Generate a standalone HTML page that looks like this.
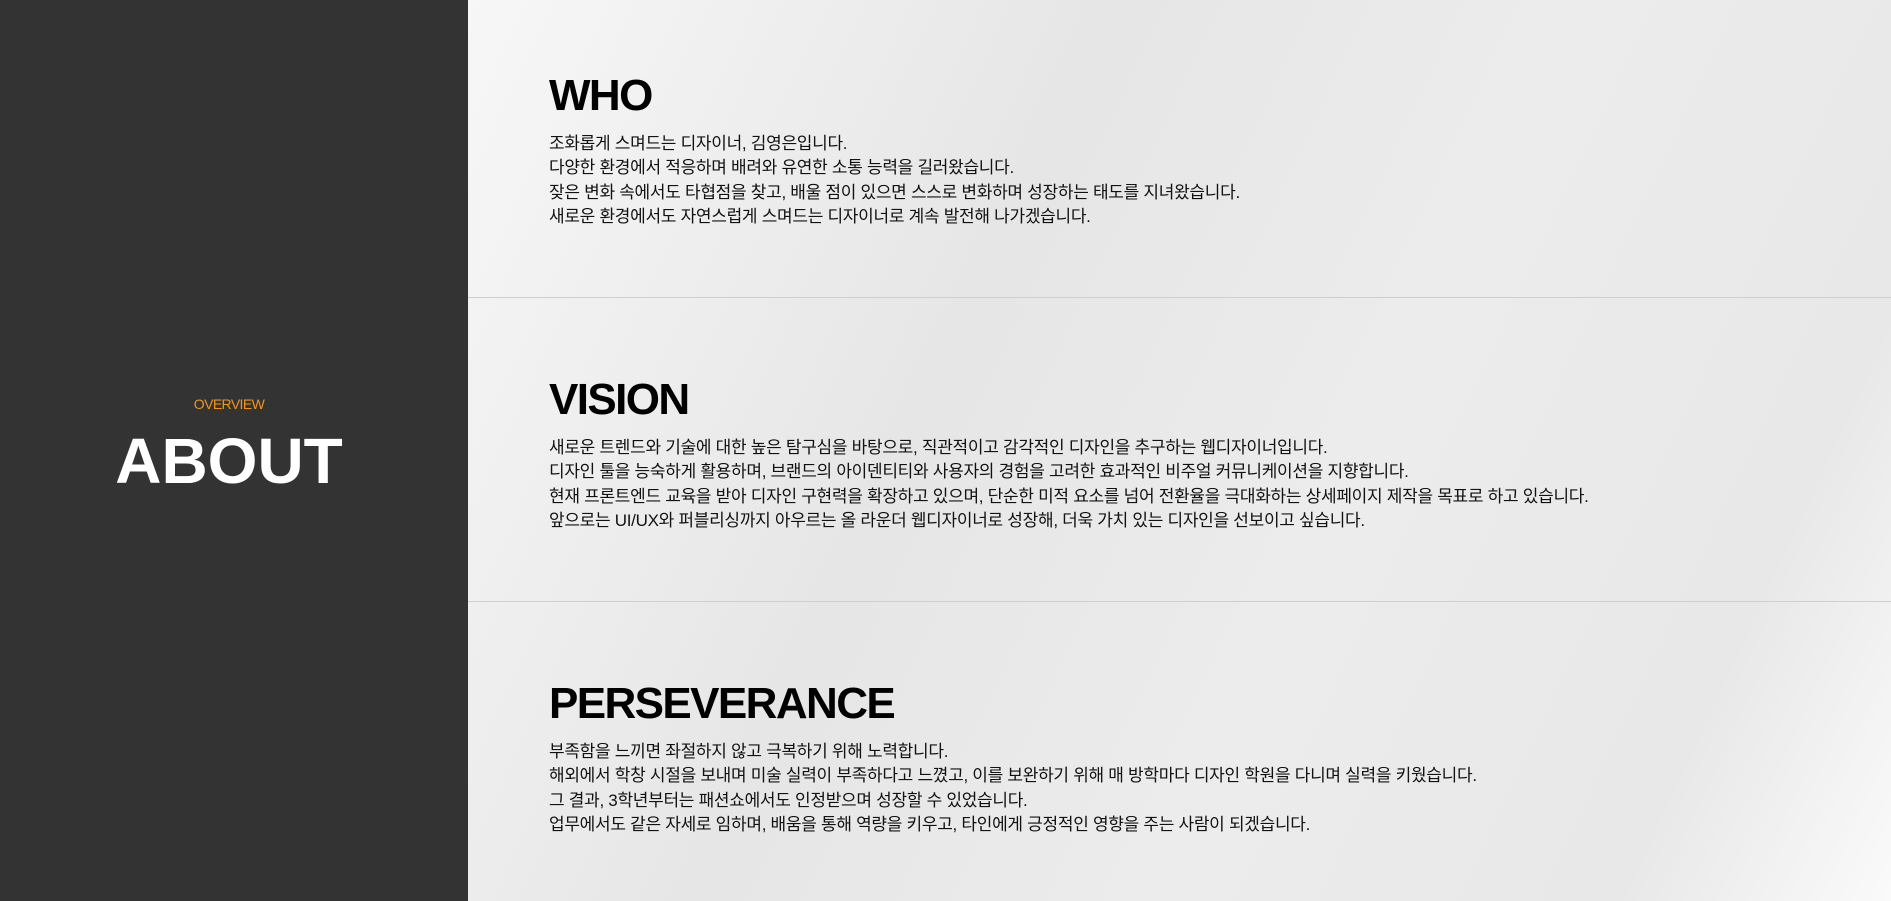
<!DOCTYPE html>
<html><head><meta charset="utf-8"><style>
*{margin:0;padding:0;box-sizing:border-box}
body{width:1891px;height:901px;overflow:hidden;font-family:"Liberation Sans","Noto Sans CJK KR",sans-serif;background:#eee;position:relative}
.left{position:absolute;left:0;top:0;width:468px;height:901px;background:#333;text-align:center}
.ov{position:absolute;top:396px;left:0;width:458px;color:#f39419;font-size:14px;letter-spacing:-0.6px}
.ab{position:absolute;top:424px;left:0;width:458px;color:#fff;font-size:64px;font-weight:bold}
.right{position:absolute;left:468px;top:0;width:1423px;height:901px;background:linear-gradient(115deg,#f7f7f7 0%,#e6e6e6 35%,#ececec 60%,#e8e8e8 85%,#fafafa 100%)}
.sec{position:absolute;left:81px}
h2{font-size:44px;font-weight:bold;color:#000;letter-spacing:-1.6px;line-height:1}
p{font-size:17px;line-height:24.3px;color:#111;margin-top:14px;letter-spacing:-0.3px}
.line{position:absolute;left:0;width:1423px;height:1px;background:#cfcfcf}
</style></head><body>
<div class="left"><div class="ov">OVERVIEW</div><div class="ab">ABOUT</div></div>
<div class="right">
<div class="sec" style="top:74px"><h2>WHO</h2><p>조화롭게 스며드는 디자이너, 김영은입니다.<br>다양한 환경에서 적응하며 배려와 유연한 소통 능력을 길러왔습니다.<br>잦은 변화 속에서도 타협점을 찾고, 배울 점이 있으면 스스로 변화하며 성장하는 태도를 지녀왔습니다.<br>새로운 환경에서도 자연스럽게 스며드는 디자이너로 계속 발전해 나가겠습니다.</p></div>
<div class="line" style="top:297px"></div>
<div class="sec" style="top:378px"><h2>VISION</h2><p>새로운 트렌드와 기술에 대한 높은 탐구심을 바탕으로, 직관적이고 감각적인 디자인을 추구하는 웹디자이너입니다.<br>디자인 툴을 능숙하게 활용하며, 브랜드의 아이덴티티와 사용자의 경험을 고려한 효과적인 비주얼 커뮤니케이션을 지향합니다.<br>현재 프론트엔드 교육을 받아 디자인 구현력을 확장하고 있으며, 단순한 미적 요소를 넘어 전환율을 극대화하는 상세페이지 제작을 목표로 하고 있습니다.<br>앞으로는 UI/UX와 퍼블리싱까지 아우르는 올 라운더 웹디자이너로 성장해, 더욱 가치 있는 디자인을 선보이고 싶습니다.</p></div>
<div class="line" style="top:601px"></div>
<div class="sec" style="top:682px"><h2>PERSEVERANCE</h2><p>부족함을 느끼면 좌절하지 않고 극복하기 위해 노력합니다.<br>해외에서 학창 시절을 보내며 미술 실력이 부족하다고 느꼈고, 이를 보완하기 위해 매 방학마다 디자인 학원을 다니며 실력을 키웠습니다.<br>그 결과, 3학년부터는 패션쇼에서도 인정받으며 성장할 수 있었습니다.<br>업무에서도 같은 자세로 임하며, 배움을 통해 역량을 키우고, 타인에게 긍정적인 영향을 주는 사람이 되겠습니다.</p></div>
</div>
</body></html>
